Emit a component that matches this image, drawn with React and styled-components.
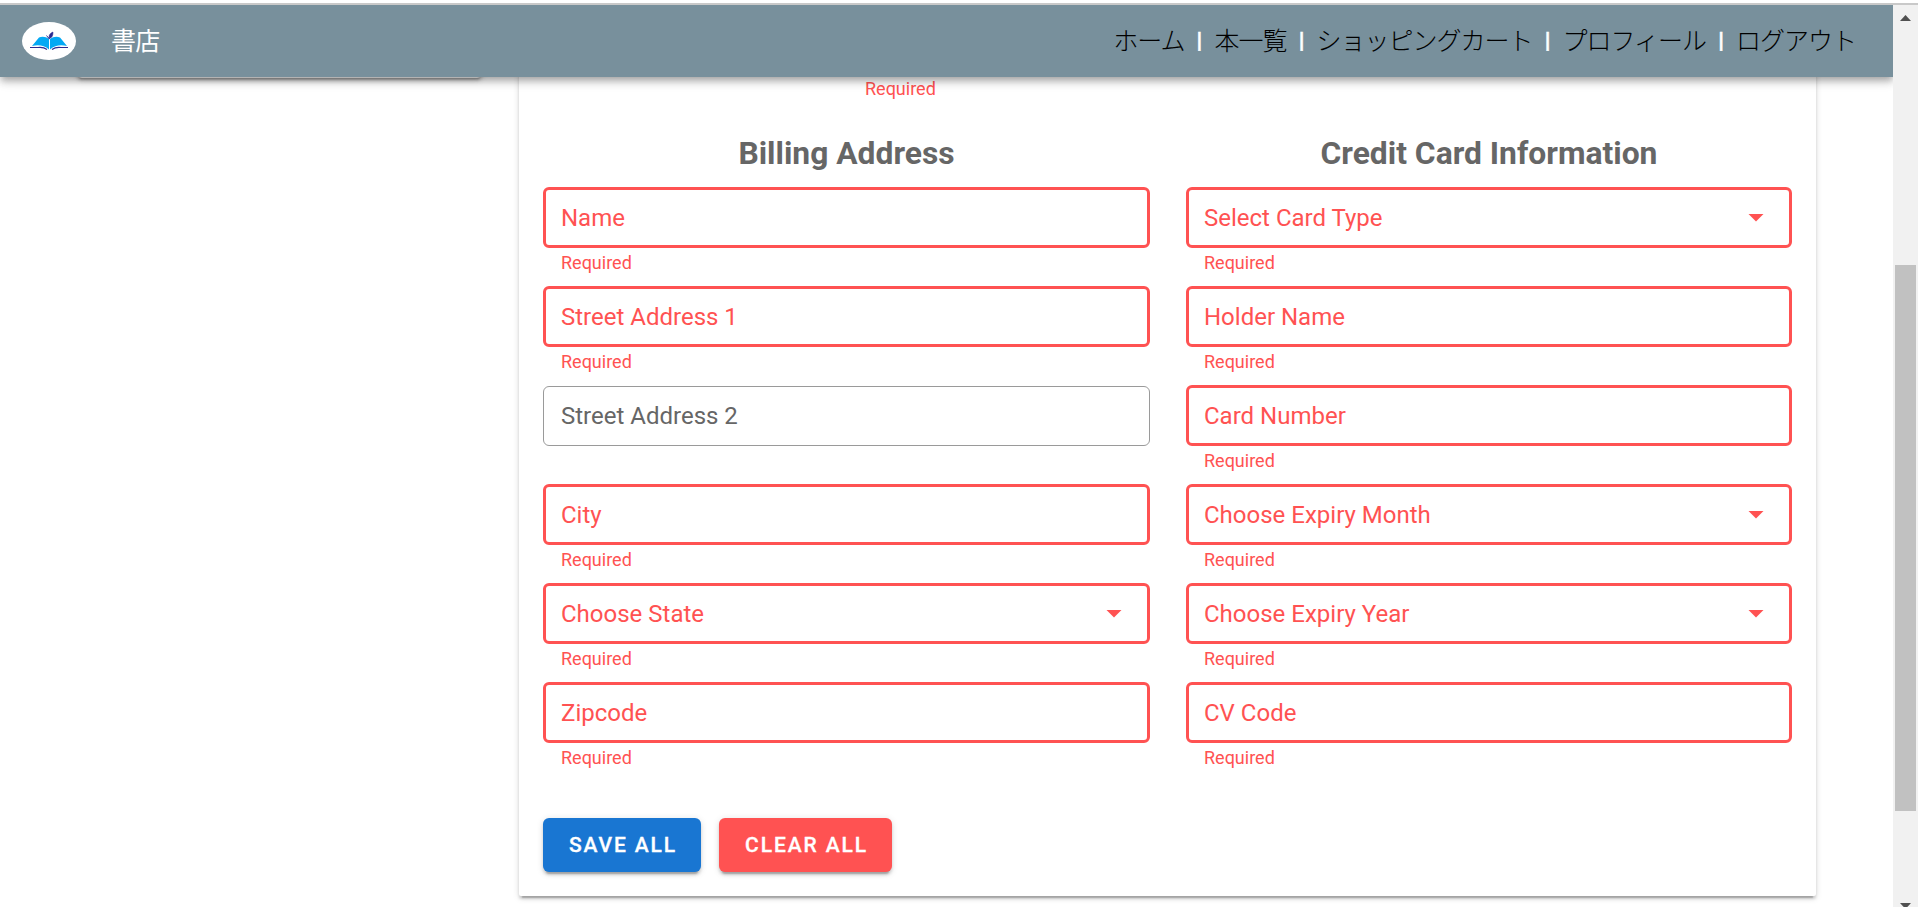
import React from "react";
import styled, { createGlobalStyle, css } from "styled-components";

const GlobalStyle = createGlobalStyle`
  * { box-sizing: border-box; }
  body {
    margin: 0;
    background: #fff;
    font-family: Roboto, "Noto Sans CJK JP", sans-serif;
    overflow: hidden;
  }
`;

const Screen = styled.div`
  display: flex;
  flex-direction: column;
  height: 907px;
  overflow: hidden;
`;

const TopEdge = styled.div`
  flex: none;
  height: 5px;
  border-top: 3px solid #fff;
  background: #c9c9c9;
`;

const Viewport = styled.div`
  flex: 1;
  min-height: 0;
  display: flex;
`;

const Page = styled.div`
  flex: 1;
  min-width: 0;
  overflow: hidden;
`;

const AppBar = styled.header`
  position: relative;
  z-index: 2;
  display: flex;
  align-items: center;
  height: 72px;
  padding: 0 37px 0 22px;
  background: #78909c;
  box-shadow: 0 3px 6px -1.5px rgba(0, 0, 0, 0.2), 0 6px 7.5px rgba(0, 0, 0, 0.14),
    0 1.5px 15px rgba(0, 0, 0, 0.12);
`;

const Logo = styled.svg`
  flex: none;
  width: 54px;
  height: 38px;
`;

const Title = styled.div`
  margin: 0 0 5px 35px;
  color: #fff;
  font: 400 25px/36px "Noto Sans CJK JP", sans-serif;
  letter-spacing: -0.8px;
`;

const Nav = styled.nav`
  display: flex;
  align-items: center;
  margin: 0 0 5px auto;
`;

const NavLink = styled.a`
  color: #000;
  font: 300 25px/36px "Noto Sans CJK JP", sans-serif;
  letter-spacing: -1px;
  white-space: nowrap;
`;

const Separator = styled.span`
  width: 30px;
  padding-top: 4px;
  text-align: center;
  color: #fff;
  font: 900 22px/36px Roboto, sans-serif;
  -webkit-text-stroke: 0.5px #fff;
`;

const Columns = styled.main`
  display: flex;
  align-items: flex-start;
  gap: 36px;
  margin-top: -12px;
  padding-left: 76px;
`;

const elevation = css`
  box-shadow: 0 4.5px 1.5px -3px rgba(0, 0, 0, 0.2), 0 3px 3px rgba(0, 0, 0, 0.14),
    0 1.5px 7.5px rgba(0, 0, 0, 0.12);
`;

const SideCard = styled.aside`
  width: 407px;
  height: 13px;
  border-radius: 6px;
  background: #fff;
  ${elevation}
`;

const FormCard = styled.section`
  width: 1297px;
  height: 831px;
  padding: 12px 24px 24px;
  border-radius: 6px 6px 2px 2px;
  background: #fff;
  ${elevation}
`;

const Message = styled.div`
  height: 18px;
  padding-left: 18px;
  color: #ff5252;
  font-size: 18px;
  line-height: 18px;
`;

const PreviousRow = styled.div`
  height: 54px;
  padding: 3px 0 0 304px;
`;

const FormColumns = styled.div`
  display: grid;
  grid-template-columns: 607px 606px;
  gap: 36px;
`;

const Heading = styled.h2`
  margin: 0;
  height: 56px;
  padding-top: 2px;
  color: #666;
  font-size: 31.8px;
  font-weight: 700;
  line-height: 40px;
  text-align: center;
`;

const Field = styled.div`
  display: flow-root;
  height: 99px;
`;

const Control = styled.div`
  display: flex;
  align-items: center;
  justify-content: space-between;
  height: ${(p) => (p.$error ? 61 : 60)}px;
  margin: ${(p) => (p.$error ? "0 0 6px" : "1px 0 6px")};
  padding: ${(p) => (p.$error ? "0 15px" : "0 17px")};
  border: ${(p) => (p.$error ? "3px solid #ff5252" : "1px solid #9a9a9a")};
  border-radius: 6px;
  color: ${(p) => (p.$error ? "#ff5252" : "#666")};
  font-size: 24px;
  line-height: 30px;
`;

const Caret = styled.svg`
  width: 36px;
  height: 36px;
  margin-bottom: 1px;
  fill: currentColor;
`;

const Actions = styled.div`
  display: flex;
  gap: 18px;
  margin-top: 37px;
`;

const Button = styled.button`
  width: ${(p) => p.$width}px;
  height: 54px;
  padding: 0 0 0 2px;
  border: 0;
  border-radius: 6px;
  background: ${(p) => p.$color};
  color: #fff;
  font: 500 21px/54px Roboto, sans-serif;
  letter-spacing: 1.875px;
  -webkit-text-stroke: 0.3px #fff;
  ${elevation}
`;

const Scrollbar = styled.div`
  flex: none;
  display: flex;
  flex-direction: column;
  align-items: center;
  width: 25px;
  background: #f1f1f1;
`;

const ScrollArrow = styled.svg`
  flex: none;
  width: 11px;
  height: 6px;
  margin: ${(p) => (p.$down ? "92px 0 0" : "10px 0 244px")};
  fill: #505050;
`;

const Thumb = styled.div`
  flex: none;
  width: 21px;
  height: 546px;
  background: #c1c1c1;
`;

const links = ["ホーム", "本一覧", "ショッピングカート", "プロフィール", "ログアウト"];

const billing = [
  { label: "Name" },
  { label: "Street Address 1" },
  { label: "Street Address 2", optional: true },
  { label: "City" },
  { label: "Choose State", select: true },
  { label: "Zipcode" },
];

const creditCard = [
  { label: "Select Card Type", select: true },
  { label: "Holder Name" },
  { label: "Card Number" },
  { label: "Choose Expiry Month", select: true },
  { label: "Choose Expiry Year", select: true },
  { label: "CV Code" },
];

function FieldGroup({ title, fields }) {
  return (
    <div>
      <Heading>{title}</Heading>
      {fields.map((f) => (
        <Field key={f.label}>
          <Control $error={!f.optional}>
            {f.label}
            {f.select && (
              <Caret viewBox="0 0 24 24">
                <path d="M7 10l5 5 5-5z" />
              </Caret>
            )}
          </Control>
          {!f.optional && <Message>Required</Message>}
        </Field>
      ))}
    </div>
  );
}

function BookLogo() {
  return (
    <Logo viewBox="0 0 54 38">
      <ellipse cx="27" cy="19" rx="27" ry="19" fill="#fff" />
      <path d="M27 17C24 14.5 20 14 17 15.5L10 24C16 22.5 22 23 27 27.5Z" fill="#03a9f4" />
      <path d="M28 17C31 14.5 35 14 38 15.5L45 24C39 22.5 33 23 28 27.5Z" fill="#03a9f4" />
      <path
        d="M8 25.5H16C20 25 23 26 25 27.5M46 25.5H39C35 25 32 26 30 27.5"
        fill="none"
        stroke="#2b2b91"
        strokeWidth="1.1"
      />
      <path
        d="M31 10C27.5 11.5 26.5 13.5 27.5 16.5C30.5 15.5 31 13 31 10ZM24.5 13.5L27.8 16.8L26.8 16.8Z"
        fill="#2b2b91"
        stroke="#2b2b91"
        strokeWidth=".5"
      />
    </Logo>
  );
}

export default function App() {
  return (
    <>
      <GlobalStyle />
      <Screen>
        <TopEdge />
        <Viewport>
          <Page>
            <AppBar>
              <BookLogo />
              <Title>書店</Title>
              <Nav>
                {links.map((link, i) => (
                  <React.Fragment key={link}>
                    {i > 0 && <Separator>|</Separator>}
                    <NavLink>{link}</NavLink>
                  </React.Fragment>
                ))}
              </Nav>
            </AppBar>
            <Columns>
              <SideCard />
              <FormCard>
                <PreviousRow>
                  <Message>Required</Message>
                </PreviousRow>
                <FormColumns>
                  <FieldGroup title="Billing Address" fields={billing} />
                  <FieldGroup title="Credit Card Information" fields={creditCard} />
                </FormColumns>
                <Actions>
                  <Button $width={158} $color="#1976d2">SAVE ALL</Button>
                  <Button $width={173} $color="#ff5252">CLEAR ALL</Button>
                </Actions>
              </FormCard>
            </Columns>
          </Page>
          <Scrollbar>
            <ScrollArrow viewBox="0 0 11 6">
              <path d="M5.5 0L11 6H0Z" />
            </ScrollArrow>
            <Thumb />
            <ScrollArrow $down viewBox="0 0 11 6">
              <path d="M0 0H11L5.5 6Z" />
            </ScrollArrow>
          </Scrollbar>
        </Viewport>
      </Screen>
    </>
  );
}
